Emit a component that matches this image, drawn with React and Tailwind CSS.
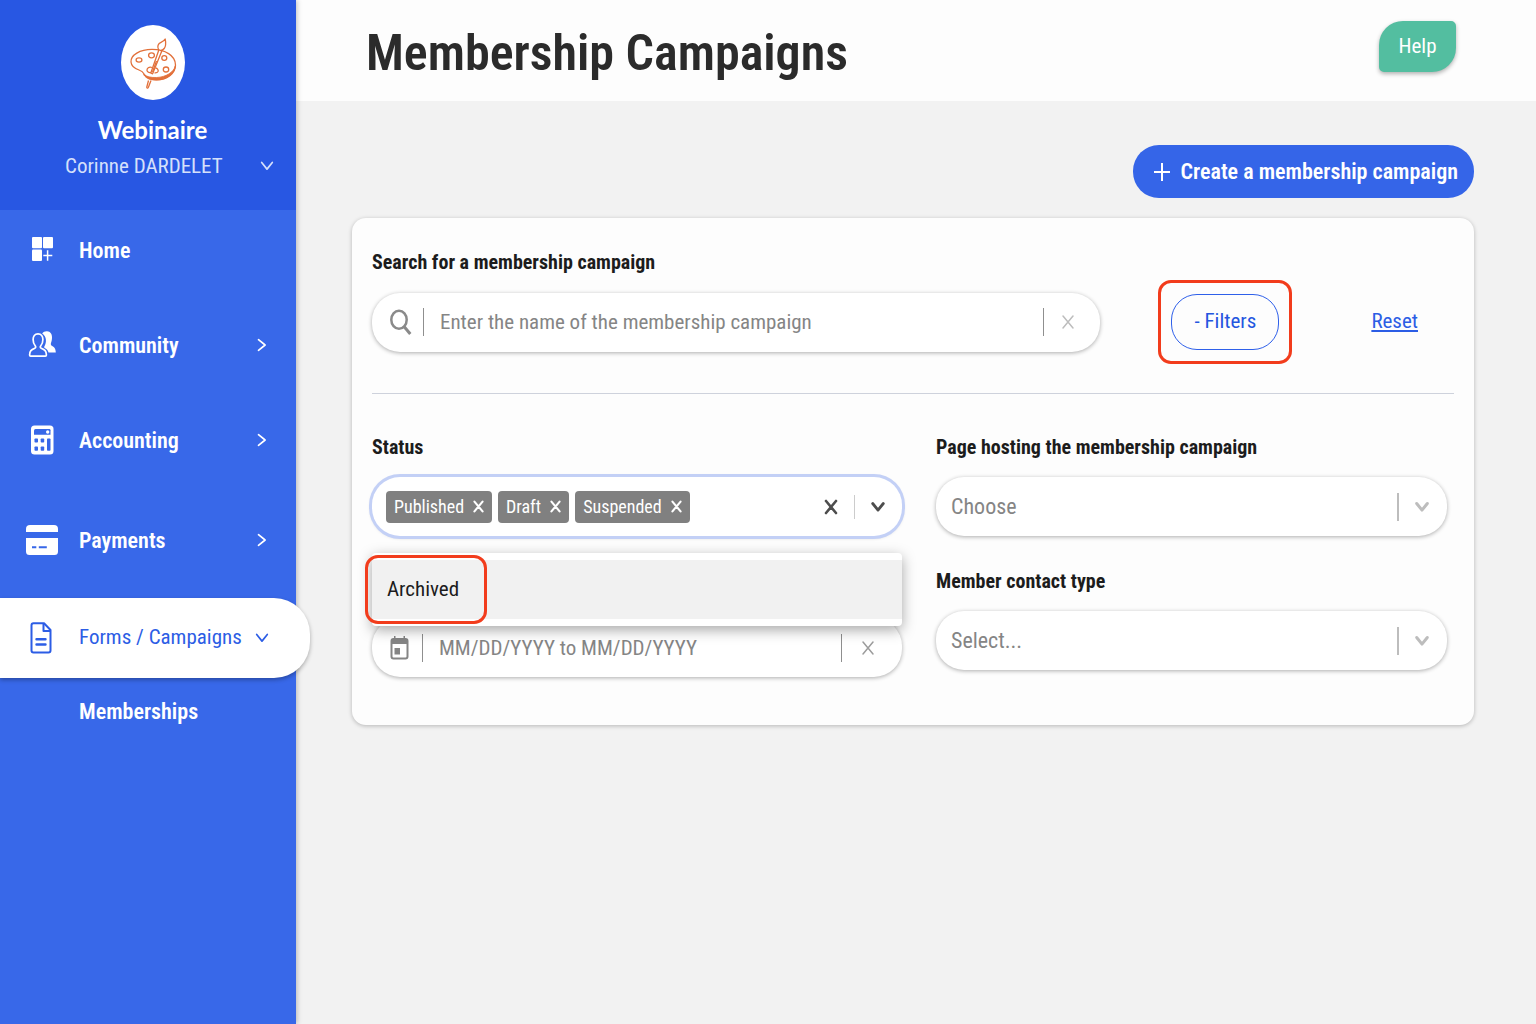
import { useState } from 'react'
import clsx from 'clsx'

/* ---------- icons ---------- */

function PaletteLogo() {
  return (
    <svg viewBox="0 0 64 75" className="h-[75px] w-16 shrink-0" fill="none" stroke="#e2703a" strokeWidth="1.3" strokeLinejoin="round" aria-hidden="true">
      <ellipse cx="32" cy="37.5" rx="32" ry="37.5" fill="#fff" stroke="none" />
      <path d="M10 37c-.5-7 9-12.600 21-12.600 13 0 23.500 6 23.500 15.600 0 8-8 14.800-19 14.800-6 0-9.500-1.500-12-5.300-1.500-2.500-2.500-3.500-5.500-4.500C13.500 43.500 10.300 41 10 37z" />
      <path d="M22.500 49.500c3 4.500 7 5.500 12.500 5.500 11 0 19-6.500 19.300-14-1.500 6-9.300 11.200-18.800 11.500-6 .2-9.500-.8-13-3z" fill="#e2703a" strokeWidth=".8" />
      <ellipse cx="18" cy="35" rx="2.900" ry="2.100" />
      <ellipse cx="30.500" cy="30.300" rx="2.900" ry="2.500" />
      <ellipse cx="43.300" cy="33" rx="2.500" ry="2.300" />
      <ellipse cx="45" cy="44.500" rx="2.700" ry="2.500" />
      <path d="M31 42.500c-3-1-5.300.8-5 3 .2 2 3 2.500 5 2M34.500 43c2 .3 3.200 2 2.500 3.500-.6 1.200-2 1.500-3.500 1.300" />
      <path d="M38 24.500 29.800 48l1.800.8L41 25.500z" fill="#fff" />
      <path d="M35.500 36 31.500 47" />
      <path d="M37.500 24.500c-1.500-3-.5-6 2.500-7.200 2-.8 3.500-1.800 4.200-3.300.8 4 .5 7.500-1 9.500-1 1.300-2.400 2-3.700 2z" fill="#fff" />
      <path d="m27.500 55.500-1.700 6.500c-.3 1.300 1 1.500 1.500.5L30 55.500" />
    </svg>
  )
}

function HomeIcon() {
  return (
    <svg viewBox="0 0 32 32" className="size-8" fill="currentColor" aria-hidden="true">
      <rect x="6" y="3" width="10" height="11.300" rx="1" />
      <rect x="17" y="3" width="10" height="11.300" rx="1" />
      <rect x="6" y="15.500" width="10" height="11.500" rx="1" />
      <path d="M21.600 16.300v10.400M17.300 21.500h9" fill="none" stroke="currentColor" strokeWidth="1.500" />
    </svg>
  )
}

function CommunityIcon() {
  return (
    <svg viewBox="0 0 32 32" className="size-8" fill="none" stroke="currentColor" strokeWidth="1.700" strokeLinejoin="round" aria-hidden="true">
      <path d="M16.200 4.500C17.300 2.900 19 2.200 21 2.300c3.600.2 5 2.900 5 6 0 2.600-.4 4.200-1 5.700-.4 1.200-.2 2.200.8 2.800 2.300 1.200 3.800 2.500 4 6.800h-7.300c-.5-2.200-1.900-3.600-3.900-4.600-.5-.3-.6-.9-.3-1.500 1.200-2 1.800-4 1.600-6.700-.1-2.400-1.500-4.700-3.700-6.300z" fill="currentColor" stroke="none" />
      <path d="M12 4.900c-3.300 0-4.900 2.300-4.900 5.700 0 2.300.7 4.600 2.100 6.200.8 1 .7 1.900-.4 2.400-3.600 1.600-5.100 2.600-5.200 6.700 0 .8.300 1.200 1.100 1.200h14.600c.8 0 1.100-.4 1.100-1.200-.1-4.100-1.600-5.100-5.200-6.700-1.100-.5-1.200-1.400-.4-2.400 1.400-1.600 2.100-3.900 2.100-6.200 0-3.400-1.600-5.700-4.900-5.700z" />
    </svg>
  )
}

function AccountingIcon() {
  return (
    <svg viewBox="0 0 32 32" className="size-8" aria-hidden="true">
      <rect x="5" y="1.500" width="22.500" height="29" rx="3.500" fill="currentColor" />
      <g fill="#3767e8">
        <path d="M9.500 5h13.800a1.200 1.200 0 0 1 1.200 1.200v4.600H8V6.500A1.500 1.500 0 0 1 9.500 5z" />
        <rect x="8.500" y="14.500" width="3.500" height="4" rx=".8" />
        <rect x="14.700" y="14.500" width="3.500" height="4" rx=".8" />
        <rect x="8.500" y="22.500" width="3.500" height="4.300" rx=".8" />
        <rect x="14.700" y="22.500" width="3.500" height="4.300" rx=".8" />
        <rect x="21" y="14.500" width="3.500" height="12.300" rx=".8" />
      </g>
      <circle cx="21.700" cy="8" r="1.700" fill="currentColor" />
    </svg>
  )
}

function PaymentsIcon() {
  return (
    <svg viewBox="0 0 32 32" className="size-8" fill="currentColor" aria-hidden="true">
      <path d="M4 1h24a4 4 0 0 1 4 4v3H0V5a4 4 0 0 1 4-4z" />
      <path d="M0 14h32v13.500a3.500 3.500 0 0 1-3.500 3.500h-25A3.500 3.500 0 0 1 0 27.500z" />
      <path d="M6 23.300h4.300M12.800 23.300h8" stroke="#3767e8" strokeWidth="2" />
    </svg>
  )
}

function FormsIcon() {
  return (
    <svg viewBox="0 0 32 32" className="size-8" fill="none" stroke="currentColor" strokeWidth="2" strokeLinejoin="round" aria-hidden="true">
      <path d="M8.500 1.200H19L25.500 8v20.500a2 2 0 0 1-2 2h-15a2 2 0 0 1-2-2V3.200a2 2 0 0 1 2-2z" />
      <path d="M18.500 1.500V9h6.500" />
      <path d="M11.500 17.200h9M11.500 22.500h9" strokeWidth="2.400" strokeLinecap="round" />
    </svg>
  )
}

function Chevron({ className, width = 1.7 }) {
  return (
    <svg viewBox="0 0 16 16" className={clsx('size-4 shrink-0', className)} fill="none" stroke="currentColor" strokeWidth={width} strokeLinecap="round" strokeLinejoin="round" aria-hidden="true">
      <path d="m2.700 4.500 5.300 6.600 5.300-6.600" />
    </svg>
  )
}

function Cross({ className = 'size-4', width = 1.5 }) {
  return (
    <svg viewBox="0 0 16 16" className={clsx('shrink-0', className)} fill="none" stroke="currentColor" strokeWidth={width} strokeLinecap="round" aria-hidden="true">
      <path d="m3 2 10 12M13 2 3 14" />
    </svg>
  )
}

function SearchIcon() {
  return (
    <svg viewBox="0 0 24 28" className="h-7 w-6 shrink-0" fill="none" stroke="#8a8a8a" strokeWidth="2.500" aria-hidden="true">
      <ellipse cx="10" cy="11.800" rx="7.700" ry="9" />
      <path d="m15 18.500 6.300 7.500" strokeWidth="3" />
    </svg>
  )
}

function CalendarIcon() {
  return (
    <svg viewBox="0 0 24 28" className="h-7 w-6 shrink-0" aria-hidden="true">
      <rect x="3.500" y="5" width="16" height="19.500" rx="2" fill="none" stroke="#858585" strokeWidth="2" />
      <path d="M3 5h17v5H3zM6 2h1.500v3H6zM15.500 2H17v3h-1.500zM6.500 14H12v6.500H6.500z" fill="#858585" />
    </svg>
  )
}

/* ---------- sidebar ---------- */

const MAIN_NAV = [
  { label: 'Home', Icon: HomeIcon },
  { label: 'Community', Icon: CommunityIcon, expandable: true },
  { label: 'Accounting', Icon: AccountingIcon, expandable: true },
]

function NavLink({ label, Icon, expandable }) {
  return (
    <a href="#" className="flex h-20 items-center px-[26px] text-[22px] font-semibold text-white">
      <Icon />
      <span className="ml-[21px] flex-1">{label}</span>
      {expandable && <Chevron className="-rotate-90" />}
    </a>
  )
}

function Sidebar() {
  return (
    <aside className="relative z-10 w-[296px] shrink-0 bg-[#3868e9] shadow-[1px_0_5px_rgba(0,0,0,0.25)]">
      <div className="h-[210px] bg-[#2857e3] pt-[25px] text-white">
        <div className="flex flex-col items-center pl-[9px]">
          <PaletteLogo />
          <p className="mt-[14px] font-['Lato','Liberation_Sans',sans-serif] text-[24px] leading-8 font-bold">Webinaire</p>
        </div>
        <button type="button" className="mt-1 flex w-full items-center pr-[21px] pl-[65px] text-[21px] leading-8 text-[#d5e0fb]">
          <span className="flex-1 text-left">Corinne DARDELET</span>
          <Chevron />
        </button>
      </div>
      <nav>
        <ul className="flex flex-col gap-[15px]">
          {MAIN_NAV.map(item => (
            <li key={item.label}><NavLink {...item} /></li>
          ))}
        </ul>
        <ul className="mt-5 flex flex-col gap-[18px]">
          <li><NavLink label="Payments" Icon={PaymentsIcon} expandable /></li>
          <li>
            <a href="#" aria-current="page" className="-mr-[14px] flex h-20 items-center rounded-r-[36px] bg-white pl-[25px] text-[21px] text-[#2c5de5] shadow-[0_2px_4px_rgba(0,0,0,0.3)]">
              <FormsIcon />
              <span className="mr-3 ml-[22px]">Forms / Campaigns</span>
              <Chevron />
            </a>
            <a href="#" className="mt-[18px] ml-[79px] block text-[22px] leading-8 font-semibold text-white">Memberships</a>
          </li>
        </ul>
      </nav>
    </aside>
  )
}

/* ---------- form controls ---------- */

function FieldLabel({ htmlFor, children }) {
  return <label htmlFor={htmlFor} className="block text-[20px] leading-8 font-bold text-[#1c1c1c]">{children}</label>
}

function Field({ className, children }) {
  return (
    <div className={clsx('flex h-[59px] items-center rounded-[28px] bg-white shadow-[0_1px_4px_rgba(0,0,0,0.32)]', className)}>
      {children}
    </div>
  )
}

function SelectField({ id, label, placeholder }) {
  return (
    <div>
      <FieldLabel htmlFor={id}>{label}</FieldLabel>
      <Field className="relative mt-[14px]">
        <select id={id} className="h-full w-full appearance-none rounded-[28px] bg-transparent pr-16 pl-[15px] text-[22px] text-[#858585]">
          <option>{placeholder}</option>
        </select>
        <span className="pointer-events-none absolute inset-y-0 right-[17px] flex items-center gap-[15px] text-[#bdbdbd]">
          <span className="h-7 w-[2px] bg-current" />
          <Chevron width={3} />
        </span>
      </Field>
    </div>
  )
}

function StatusField() {
  const [selected, setSelected] = useState(['Published', 'Draft', 'Suspended'])
  const options = ['Published', 'Draft', 'Suspended', 'Archived'].filter(o => !selected.includes(o))

  return (
    <div className="relative">
      <FieldLabel htmlFor="status">Status</FieldLabel>
      <Field className="mt-[14px] pr-4 pl-[14px] ring-3 ring-[#c3d0f6]">
        <div className="flex min-w-0 flex-1 items-center gap-[6px]">
          {selected.map(name => (
            <span key={name} className="flex h-8 items-center rounded-[4px] bg-[#808080] pl-2 text-[18px] text-white">
              {name}
              <button type="button" aria-label={`Remove ${name}`} onClick={() => setSelected(s => s.filter(n => n !== name))} className="flex h-full items-center pr-[7px] pl-2">
                <Cross className="size-[13px]" width={2.6} />
              </button>
            </span>
          ))}
          <input id="status" role="combobox" aria-expanded="true" aria-controls="status-options" className="min-w-0 flex-1 bg-transparent outline-none" />
        </div>
        <button type="button" aria-label="Clear status" onClick={() => setSelected([])} className="text-[#4d4d4d]">
          <Cross width={2.6} />
        </button>
        <span className="mx-[15px] h-6 w-px bg-[#cccccc]" />
        <button type="button" aria-label="Toggle status options" className="text-[#4d4d4d]">
          <Chevron width={2.8} />
        </button>
      </Field>
      <ul id="status-options" role="listbox" className="absolute inset-x-0 top-full z-10 mt-[17px] rounded-[4px] bg-white py-[7px] shadow-[0_4px_14px_rgba(0,0,0,0.35)]">
        {options.map(name => (
          <li key={name} role="option" aria-selected="false" onClick={() => setSelected(s => [...s, name])} className="flex h-[59px] items-center bg-[#f1f1f1] pl-[15px] text-[21px] text-[#1c1c1c]">
            {name}
          </li>
        ))}
        <li aria-hidden="true" className="pointer-events-none absolute top-[2px] -left-[7px] h-[69px] w-[122px] rounded-[13px] border-3 border-[#f23c1c]" />
      </ul>
    </div>
  )
}

function CampaignFilters() {
  return (
    <section className="mt-5 rounded-[14px] bg-[#fdfdfd] px-5 pt-7 pb-12 shadow-[0_1px_4px_rgba(0,0,0,0.25)]">
      <FieldLabel htmlFor="search">Search for a membership campaign</FieldLabel>
      <div className="mt-[2px] flex items-center">
        <Field className="flex-1 pr-6 pl-[17px]">
          <SearchIcon />
          <span className="ml-[10px] h-7 w-px bg-[#8f8f8f]" />
          <input id="search" placeholder="Enter the name of the membership campaign" className="h-full min-w-0 flex-1 bg-transparent px-4 text-[21px] text-[#333] outline-none placeholder:text-[#858585]" />
          <span className="mr-4 h-7 w-px bg-[#8f8f8f]" />
          <button type="button" aria-label="Clear search" className="text-[#bdbdbd]"><Cross /></button>
        </Field>
        <div className="ml-[58px] rounded-[13px] border-3 border-[#f23c1c] px-[10px] py-[11px]">
          <button type="button" className="flex h-14 w-[108px] items-center justify-center rounded-[26px] border border-[#2f60ea] text-[21px] text-[#2456e0]">- Filters</button>
        </div>
        <a href="#" className="mr-9 ml-[79px] text-[21px] text-[#2c5de5] underline">Reset</a>
      </div>
      <hr className="mt-[29px] border-[#ced2dc]" />
      <div className="mt-[37px] mr-[7px] grid grid-cols-[minmax(0,530fr)_minmax(0,511fr)] gap-x-[34px]">
        <div>
          <StatusField />
          <Field className="mt-[82px] pr-[26px] pl-4">
            <CalendarIcon />
            <span className="ml-[10px] h-7 w-px bg-[#8f8f8f]" />
            <input aria-label="Date range" placeholder="MM/DD/YYYY to MM/DD/YYYY" className="h-full min-w-0 flex-1 bg-transparent px-4 text-[21px] text-[#333] outline-none placeholder:text-[#858585]" />
            <span className="mr-[18px] h-7 w-px bg-[#8f8f8f]" />
            <button type="button" aria-label="Clear date range" className="text-[#9c9c9c]"><Cross /></button>
          </Field>
        </div>
        <div className="flex flex-col gap-[29px]">
          <SelectField id="host-page" label="Page hosting the membership campaign" placeholder="Choose" />
          <SelectField id="contact-type" label="Member contact type" placeholder="Select..." />
        </div>
      </div>
    </section>
  )
}

export default function App() {
  return (
    <div className="flex min-h-screen bg-[#f2f2f2] font-['Roboto_Condensed','Roboto',sans-serif]">
      <Sidebar />
      <div className="min-w-0 flex-1">
        <header className="flex h-[101px] items-start justify-between bg-[#fdfdfd] pr-20 pl-[70px]">
          <h1 className="mt-[25px] text-[50px] leading-[56px] font-semibold text-[#2b2b2b]">Membership Campaigns</h1>
          <button type="button" className="mt-[21px] h-[51px] w-[77px] rounded-tl-[24px] rounded-tr-[5px] rounded-br-[24px] rounded-bl-[5px] bg-[#53bea0] text-[21px] text-white shadow-[0_2px_4px_rgba(0,0,0,0.3)]">Help</button>
        </header>
        <main className="pt-11 pr-[62px] pb-10 pl-14">
          <div className="flex justify-end">
            <button type="button" className="flex h-[53px] items-center rounded-[26px] bg-[#3565e8] pr-4 pl-5 text-[22px] font-semibold text-white">
              <svg viewBox="0 0 18 18" className="mr-[10px] size-[18px]" stroke="currentColor" strokeWidth="2" aria-hidden="true">
                <path d="M9 0v18M1 9h16" />
              </svg>
              Create a membership campaign
            </button>
          </div>
          <CampaignFilters />
        </main>
      </div>
    </div>
  )
}
